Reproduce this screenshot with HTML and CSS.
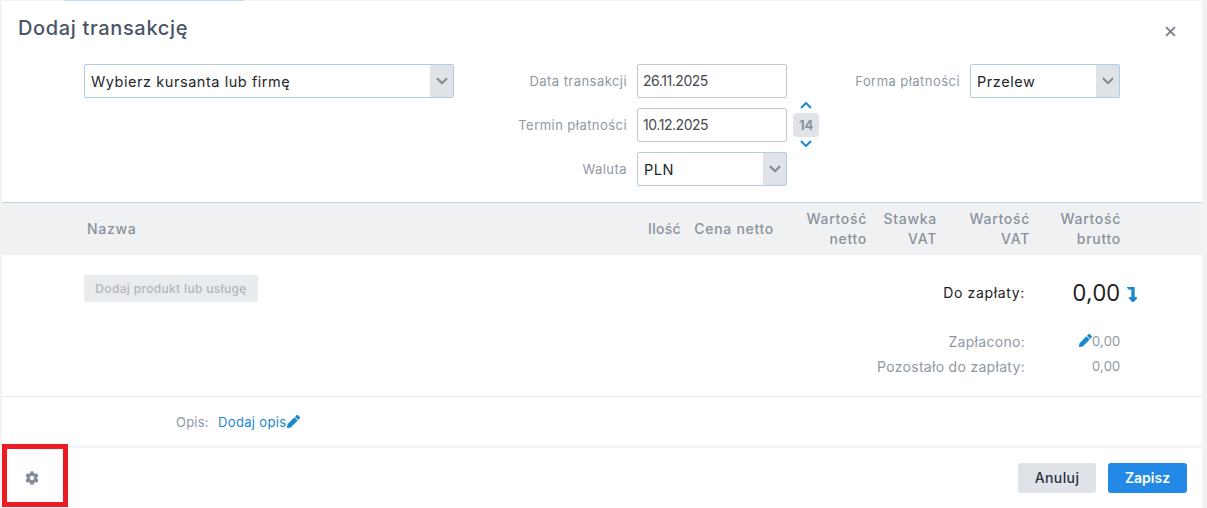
FILE: index.html
```html
<!DOCTYPE html>
<html lang="pl">
<head>
<meta charset="utf-8">
<title>Dodaj transakcję</title>
<link rel="stylesheet" href="styles.css">
</head>
<body>
<div class="backdrop-strip"></div>
<main class="modal">
  <header class="modal-head">
    <h1 class="title">Dodaj transakcję</h1>
    <button class="close" aria-label="Zamknij"><svg viewBox="0 0 10 10" width="11" height="11"><path d="M1 1l8 8M9 1l-8 8" class="close-x"/></svg></button>
  </header>

  <section class="form">
    <div class="select select-client">
      <span class="select-text">Wybierz kursanta lub firmę</span>
      <span class="select-arrow"><svg viewBox="0 0 12 8" width="12" height="8"><path d="M1 1.2l5 5 5-5" class="chev"/></svg></span>
    </div>

    <div class="dates">
      <label class="label">Data transakcji</label>
      <div class="input">26.11.2025</div>
      <span></span>
      <label class="label">Termin płatności</label>
      <div class="input">10.12.2025</div>
      <div class="stepper">
        <svg class="step-up" viewBox="0 0 12 7" width="12" height="7"><path d="M1 6l5-5 5 5" class="chev-blue"/></svg>
        <span class="badge">14</span>
        <svg class="step-down" viewBox="0 0 12 7" width="12" height="7"><path d="M1 1l5 5 5-5" class="chev-blue"/></svg>
      </div>
      <label class="label">Waluta</label>
      <div class="select">
        <span class="select-text">PLN</span>
        <span class="select-arrow"><svg viewBox="0 0 12 8" width="12" height="8"><path d="M1 1.2l5 5 5-5" class="chev"/></svg></span>
      </div>
    </div>

    <div class="payment">
      <label class="label">Forma płatności</label>
      <div class="select select-pay">
        <span class="select-text">Przelew</span>
        <span class="select-arrow"><svg viewBox="0 0 12 8" width="12" height="8"><path d="M1 1.2l5 5 5-5" class="chev"/></svg></span>
      </div>
    </div>
  </section>

  <section class="thead">
    <div class="th th-name">Nazwa</div>
    <div class="th th-qty">Ilość</div>
    <div class="th">Cena netto</div>
    <div class="th">Wartość<br>netto</div>
    <div class="th">Stawka<br>VAT</div>
    <div class="th">Wartość<br>VAT</div>
    <div class="th">Wartość<br>brutto</div>
  </section>

  <section class="tbody">
    <button class="add-btn">Dodaj produkt lub usługę</button>
    <div class="totals">
      <div class="total-main">
        <span class="total-label">Do zapłaty:</span>
        <span class="total-value">0,00</span>
        <svg class="total-arrow" viewBox="0 0 320 512" width="10" height="15" preserveAspectRatio="none"><path d="M313.553 392.331L209.587 504.334c-9.485 10.214-25.676 10.229-35.174 0L70.438 392.331C56.232 377.031 67.062 352 88.025 352H152V80H68.024a11.996 11.996 0 0 1-8.485-3.515l-56-56C-4.021 12.926 1.333 0 12.024 0H208c13.255 0 24 10.745 24 24v328h63.966c20.878 0 31.851 24.969 17.587 40.331z"/></svg>
      </div>
      <div class="total-row total-paid">
        <span class="row-label">Zapłacono:</span>
        <span class="row-value"><svg class="pencil" viewBox="0 0 512 512" width="13" height="13"><path d="M497.9 142.1l-46.1 46.1c-4.7 4.7-12.3 4.7-17 0l-111-111c-4.7-4.7-4.7-12.3 0-17l46.1-46.1c18.7-18.7 49.1-18.7 67.9 0l60.1 60.1c18.8 18.7 18.8 49.1 0 67.9zM284.2 99.8L21.6 362.4.4 483.9c-2.9 16.4 11.4 30.6 27.8 27.8l121.5-21.3 262.6-262.6c4.7-4.7 4.7-12.3 0-17l-111-111c-4.8-4.7-12.4-4.7-17.1 0z"/></svg>0,00</span>
      </div>
      <div class="total-row">
        <span class="row-label">Pozostało do zapłaty:</span>
        <span class="row-value">0,00</span>
      </div>
    </div>
  </section>

  <section class="desc">
    <span class="desc-label">Opis:</span>
    <a class="desc-link">Dodaj opis<svg class="pencil" viewBox="0 0 512 512" width="13" height="13"><path d="M497.9 142.1l-46.1 46.1c-4.7 4.7-12.3 4.7-17 0l-111-111c-4.7-4.7-4.7-12.3 0-17l46.1-46.1c18.7-18.7 49.1-18.7 67.9 0l60.1 60.1c18.8 18.7 18.8 49.1 0 67.9zM284.2 99.8L21.6 362.4.4 483.9c-2.9 16.4 11.4 30.6 27.8 27.8l121.5-21.3 262.6-262.6c4.7-4.7 4.7-12.3 0-17l-111-111c-4.8-4.7-12.4-4.7-17.1 0z"/></svg></a>
  </section>

  <footer class="foot">
    <svg class="gear" viewBox="0 0 512 512" width="14" height="14"><path d="M487.4 315.7l-42.6-24.6c4.3-23.2 4.3-47 0-70.2l42.6-24.6c4.9-2.8 7.1-8.6 5.5-14-11.1-35.6-30-67.8-54.7-94.6-3.8-4.1-10-5.1-14.8-2.3L380.8 110c-17.9-15.4-38.5-27.3-60.8-35.1V25.8c0-5.6-3.9-10.5-9.4-11.7-36.7-8.2-74.3-7.8-109.2 0-5.5 1.2-9.4 6.1-9.4 11.7V75c-22.2 7.9-42.8 19.8-60.8 35.1L88.7 85.5c-4.9-2.8-11-1.9-14.8 2.3-24.7 26.7-43.6 58.9-54.7 94.6-1.7 5.4.6 11.2 5.5 14L67.3 221c-4.3 23.2-4.3 47 0 70.2l-42.6 24.6c-4.9 2.8-7.1 8.6-5.5 14 11.1 35.6 30 67.8 54.7 94.6 3.8 4.1 10 5.1 14.8 2.3l42.6-24.6c17.9 15.4 38.5 27.3 60.8 35.1v49.2c0 5.6 3.9 10.5 9.4 11.7 36.7 8.2 74.3 7.8 109.2 0 5.5-1.2 9.4-6.1 9.4-11.7v-49.2c22.2-7.9 42.8-19.8 60.8-35.1l42.6 24.6c4.9 2.8 11 1.9 14.8-2.3 24.7-26.7 43.6-58.9 54.7-94.6 1.5-5.5-.7-11.3-5.6-14.1zM256 336c-44.1 0-80-35.9-80-80s35.9-80 80-80 80 35.9 80 80-35.9 80-80 80z"/></svg>
    <div class="foot-actions">
      <button class="btn btn-cancel">Anuluj</button>
      <button class="btn btn-save">Zapisz</button>
    </div>
  </footer>
  <div class="highlight"></div>
</main>
</body>
</html>
```
FILE: styles.css
```css
* { box-sizing: border-box; }
html, body { height: 100%; }
body {
  margin: 0;
  background: #f1f3f1;
  font-family: "Inter", "Noto Sans", sans-serif;
  overflow: hidden;
  position: relative;
}
.backdrop-strip {
  position: absolute;
  left: 64px;
  top: 0;
  width: 180px;
  height: 1px;
  background: #c5dcf2;
}
.modal {
  position: relative;
  margin: 1px 0 0 2px;
  width: 1200px;
  height: 507px;
  background: #fff;
  display: flex;
  flex-direction: column;
}
.modal-head {
  height: 63px;
  padding: 14px 26px 0 16px;
  display: flex;
  justify-content: space-between;
  align-items: flex-start;
}
.title {
  margin: 0;
  font-size: 20px;
  line-height: 26px;
  font-weight: 500;
  color: #4a5567;
  letter-spacing: 0.65px;
}
.close {
  border: 0;
  background: none;
  padding: 0;
  margin-top: 11px;
  width: 11px;
  height: 11px;
  display: flex;
}
.close-x { stroke: #78838f; stroke-width: 1.8; fill: none; }

.form {
  display: flex;
  align-items: flex-start;
  padding-left: 82px;
  height: 139px;
  border-bottom: 1px solid #c8d2da;
}
.select {
  height: 34px;
  width: 150px;
  border: 1px solid #b3cbde;
  border-radius: 2px;
  display: flex;
  align-items: center;
  justify-content: space-between;
  background: #fff;
}
.select-client { width: 370px; }
.select-text {
  padding-left: 6px;
  font-size: 14.5px;
  color: #23262e;
  letter-spacing: 0.55px;
}
.select-arrow {
  align-self: stretch;
  width: 23px;
  background: #dfe3e8;
  display: flex;
  align-items: center;
  justify-content: center;
}
.chev { stroke: #7c8893; stroke-width: 2; fill: none; }
.chev-blue { stroke: #1a8ad2; stroke-width: 2; fill: none; }

.dates {
  display: grid;
  grid-template-columns: 183px 150px 32px;
  grid-auto-rows: 34px;
  row-gap: 10px;
  align-items: center;
}
.label {
  font-size: 13px;
  color: #8f98a3;
  text-align: right;
  padding-right: 10px;
  letter-spacing: 0.45px;
  white-space: nowrap;
}
.input {
  height: 34px;
  border: 1px solid #c3c7cc;
  border-radius: 2px;
  padding-left: 5px;
  font-size: 14px;
  line-height: 32px;
  color: #454a52;
  letter-spacing: -0.45px;
}
.stepper {
  padding-left: 6px;
  display: flex;
  flex-direction: column;
  align-items: center;
  justify-content: center;
  height: 34px;
  position: relative;
}
.badge {
  width: 26px;
  height: 24px;
  border-radius: 4px;
  background: #dfe3e8;
  color: #8a939d;
  font-size: 13px;
  font-weight: 700;
  line-height: 24px;
  text-align: center;
  letter-spacing: -0.3px;
}
.step-up, .step-down { position: absolute; left: 13px; }
.step-up { top: -6px; }
.step-down { bottom: -5px; }

.payment {
  display: flex;
  align-items: center;
}
.payment .label { width: 151px; }

.thead {
  display: grid;
  grid-template-columns: 1fr 36px 93px 93px 70px 93px 91px;
  height: 52px;
  padding: 0 81px 0 85px;
  background: #f0f1f3;
  align-items: center;
}
.th {
  text-align: right;
  font-size: 14px;
  line-height: 20px;
  font-weight: 500;
  color: #8a939d;
  white-space: nowrap;
  letter-spacing: 0.7px;
}
.th-name { text-align: left; }
.th-qty { letter-spacing: 0.3px; }

.tbody {
  height: 142px;
  padding: 20px 82px 0 82px;
  display: flex;
  justify-content: space-between;
  align-items: flex-start;
  border-bottom: 1px solid #e8e9ea;
}
.add-btn {
  width: 174px;
  height: 27px;
  border: 0;
  padding: 0;
  background: #e9ecef;
  border-radius: 2px;
  color: #b2b5bb;
  font: 500 12px/27px "Inter", sans-serif;
  letter-spacing: 0.33px;
}
.totals { width: 300px; position: relative; }
.total-main {
  display: grid;
  grid-template-columns: 1fr 95px;
  align-items: center;
  height: 34px;
}
.total-label {
  text-align: right;
  font-size: 14px;
  letter-spacing: 0.65px;
  color: #1e2126;
}
.total-value {
  text-align: right;
  font-family: "Open Sans", sans-serif;
  font-size: 24px;
  line-height: 34px;
  color: #1c1f24;
}
.total-arrow {
  position: absolute;
  right: -17px;
  top: 12px;
  fill: #1a87d0;
  stroke: #1a87d0;
  stroke-width: 24;
}
.total-row {
  display: grid;
  grid-template-columns: 1fr 95px;
  align-items: center;
  height: 25px;
  font-size: 14px;
  letter-spacing: 0.3px;
  color: #8f98a3;
}
.total-paid { margin-top: 20px; }
.row-label { text-align: right; }
.row-value {
  text-align: right;
  font-family: "Open Sans", sans-serif;
  font-size: 14.2px;
  letter-spacing: 0;
  color: #8f98a3;
  margin-top: -2px;
}
.pencil { fill: #1a87d0; vertical-align: -1px; }

.desc {
  height: 48px;
  padding: 2px 0 0 174px;
  display: flex;
  align-items: center;
  font-size: 13px;
}
.desc-label { color: #8f98a3; width: 42px; letter-spacing: 0.2px; }
.desc-link { color: #1a87d0; letter-spacing: 0.35px; }

.foot {
  flex: 1;
  border-top: 3px solid #f4f5f5;
  display: flex;
  justify-content: space-between;
  align-items: flex-start;
  padding: 15px 15px 0 23px;
}
.gear { fill: #858d97; margin-top: 8px; }
.foot-actions { display: flex; gap: 12px; }
.btn {
  height: 30px;
  border: 0;
  border-radius: 3px;
  font: 500 14px/30px "Inter", sans-serif;
  padding: 0;
}
.btn-cancel { width: 78px; background: #dfe3e8; color: #2c3140; letter-spacing: 0.4px; }
.btn-save { width: 79px; background: #2289e6; color: #fff; font-weight: 600; }

.highlight {
  position: absolute;
  left: 0;
  top: 443px;
  width: 66px;
  height: 63px;
  border: 5px solid #ed1c24;
}
```
